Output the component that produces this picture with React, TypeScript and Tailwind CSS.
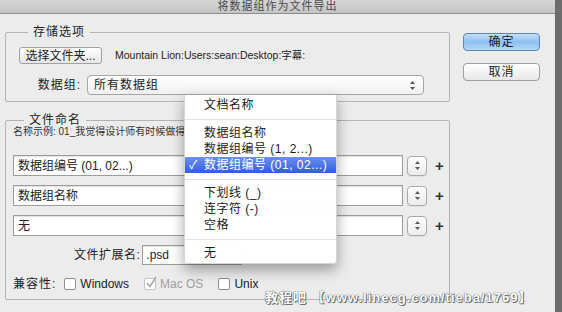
import React from 'react';

const FONT = '"Liberation Sans", "Noto Sans CJK SC", sans-serif';

/** 上下小箭头 (弹出菜单的标志) */
function UpDown({ className = '' }: { className?: string }) {
  return (
    <svg width="7" height="11" viewBox="0 0 7 11" className={className}>
      <path d="M3.5 1 L6 4 L1 4 Z" fill="#5a5a5a" />
      <path d="M3.5 10 L6 7 L1 7 Z" fill="#5a5a5a" />
    </svg>
  );
}

function Stepper() {
  return (
    <div className="w-[20px] h-[20px] rounded-[4px] border border-[#a9a9a9] bg-gradient-to-b from-white to-[#ececec] flex items-center justify-center shadow-[0_1px_0_rgba(0,0,0,0.05)]">
      <UpDown />
    </div>
  );
}

function Field({ value }: { value: string }) {
  return (
    <div className="flex items-center gap-[4px]">
      <div className="w-[390px] h-[21px] bg-white border border-[#9c9c9c] shadow-[inset_0_1px_1px_rgba(0,0,0,0.12)] flex items-center px-[4px] text-[12px] text-[#222]">
        {value}
      </div>
      <Stepper />
      <span className="ml-[4px] text-[15px] font-bold leading-none text-[#333]">+</span>
    </div>
  );
}

function Check({ checked = false, disabled = false }: { checked?: boolean; disabled?: boolean }) {
  return (
    <div
      className={`w-[12px] h-[12px] rounded-[2px] border bg-white relative ${
        disabled ? 'border-[#c4c4c4]' : 'border-[#8e8e8e]'
      }`}
    >
      {checked && (
        <svg width="13" height="13" viewBox="0 0 13 13" className="absolute -top-[3px] left-0">
          <path d="M2 7 L5 10.5 L11 1" stroke="#a9a9a9" strokeWidth="1.6" fill="none" />
        </svg>
      )}
    </div>
  );
}

const MENU: (string | null)[] = [
  '文档名称',
  null,
  '数据组名称',
  '数据组编号 (1, 2...)',
  '数据组编号 (01, 02...)',
  null,
  '下划线 (_)',
  '连字符 (-)',
  '空格',
  null,
  '无',
];

export default function App() {
  return (
    <div className="w-[562px] h-[312px] bg-[#6c6c6c] flex overflow-hidden relative" style={{ fontFamily: FONT }}>
      {/* 对话框窗口 */}
      <div className="w-[555px] h-full bg-[#ececec] flex flex-col">
        {/* 标题栏 */}
        <div className="h-[14px] shrink-0 bg-gradient-to-b from-[#d6d6d6] to-[#c4c4c4] border-b border-[#8d8d8d] flex justify-center">
          <span className="text-[11px] leading-[13px] text-[#4a4a4a] tracking-[1px]">将数据组作为文件导出</span>
        </div>

        <div className="flex flex-1 min-h-0">
          {/* 左栏 */}
          <div className="w-[445px] ml-[5px] flex flex-col">
            {/* 存储选项 */}
            <fieldset className="mt-[11px] border border-[#b4b4b4] rounded-[2px] pl-[13px] pr-[23px] pb-[6px]">
              <legend className="ml-[9px] px-[5px] text-[12px] leading-[14px] text-[#222] tracking-[1px]">存储选项</legend>
              <div className="pt-[8px] flex items-center">
                <button className="w-[83px] h-[17px] rounded-[3px] border border-[#a1a1a1] bg-gradient-to-b from-white to-[#e6e6e6] text-[12px] leading-none text-[#222]">
                  选择文件夹...
                </button>
                <span className="ml-[13px] text-[10.5px] text-[#222]">Mountain Lion:Users:sean:Desktop:字幕:</span>
              </div>
              <div className="mt-[11px] flex items-center">
                <span className="w-[62px] text-right text-[12px] text-[#222] tracking-[1px]">数据组:</span>
                <div className="ml-[6px] w-[337px] h-[20px] rounded-[4px] border border-[#a6a6a6] bg-gradient-to-b from-white to-[#f0f0f0] flex items-center justify-between pl-[6px] pr-[7px]">
                  <span className="text-[12px] text-[#222] tracking-[1px]">所有数据组</span>
                  <UpDown />
                </div>
              </div>
            </fieldset>

            {/* 文件命名 */}
            <fieldset className="mt-[11px] border border-[#b4b4b4] rounded-[2px] pl-[7px] pb-[6px]">
              <legend className="ml-[11px] px-[5px] text-[12px] leading-[14px] text-[#222] tracking-[1px]">文件命名</legend>
              <div className="-mt-[1px] text-[10px] leading-[12px] text-[#333] whitespace-nowrap overflow-hidden">
                名称示例: 01_我觉得设计师有时候做得...
              </div>
              <div className="mt-[17px] flex flex-col gap-[9px]">
                <Field value="数据组编号 (01, 02...)" />
                <Field value="数据组名称" />
                <Field value="无" />
              </div>
              <div className="mt-[9px] flex items-center">
                <span className="ml-[61px] text-[12px] text-[#222] tracking-[0.5px]">文件扩展名:</span>
                <div className="ml-[2px] w-[100px] h-[20px] bg-white border border-[#9c9c9c] shadow-[inset_0_1px_1px_rgba(0,0,0,0.12)] flex items-center px-[3px] text-[12px] text-[#222]">
                  .psd
                </div>
              </div>
              <div className="mt-[10px] flex items-center text-[12px] text-[#222]">
                <span className="tracking-[1px]">兼容性:</span>
                <div className="ml-[8px] flex items-center gap-[4px]">
                  <Check />
                  <span>Windows</span>
                </div>
                <div className="ml-[15px] flex items-center gap-[4px]">
                  <Check checked disabled />
                  <span className="text-[#a0a0a0]">Mac OS</span>
                </div>
                <div className="ml-[15px] flex items-center gap-[4px]">
                  <Check />
                  <span>Unix</span>
                </div>
              </div>
            </fieldset>
          </div>

          {/* 右栏按钮 */}
          <div className="ml-[13px] pt-[19px] flex flex-col gap-[12px]">
            <button className="w-[77px] h-[18px] rounded-[4px] border border-[#5d87bd] bg-gradient-to-b from-[#c4def8] via-[#8dc0f0] to-[#b4d6f7] text-[12px] leading-none text-[#1c1c1c] tracking-[1px]">
              确定
            </button>
            <button className="w-[77px] h-[18px] rounded-[4px] border border-[#9e9e9e] bg-gradient-to-b from-white to-[#e7e7e7] text-[12px] leading-none text-[#1c1c1c] tracking-[1px]">
              取消
            </button>
          </div>
        </div>
      </div>

      {/* 弹出菜单 */}
      <div className="absolute left-[184px] top-[95px] w-[153px] bg-white/[0.97] rounded-b-[4px] shadow-[0_6px_14px_rgba(0,0,0,0.35)] border border-[#d6d6d6] border-t-0 pt-[2px] pb-[2px]">
        {MENU.map((item, i) =>
          item === null ? (
            <div key={i} className="h-[12px] flex items-center">
              <div className="w-full h-px bg-[#e3e3e3]" />
            </div>
          ) : item === '数据组编号 (01, 02...)' ? (
            <div
              key={i}
              className="h-[16px] flex items-center bg-gradient-to-b from-[#6a8ff0] to-[#2f5ee0] text-white text-[12px]"
            >
              <span className="w-[19px] pl-[4px] text-[12px]">✓</span>
              <span className="tracking-[0.5px]">{item}</span>
            </div>
          ) : (
            <div key={i} className="h-[16px] flex items-center pl-[19px] text-[12px] text-[#1c1c1c] tracking-[0.5px]">
              {item}
            </div>
          )
        )}
      </div>

      {/* 水印 */}
      <div
        className="absolute left-[265px] top-[288px] text-[13px] font-bold text-white whitespace-nowrap tracking-[1px]"
        style={{ textShadow: '0 0 1px #555, 0 0 1px #555, 1px 1px 0 #777' }}
      >
        教程吧 【www.linecg.com/tieba/1769】
      </div>
    </div>
  );
}
